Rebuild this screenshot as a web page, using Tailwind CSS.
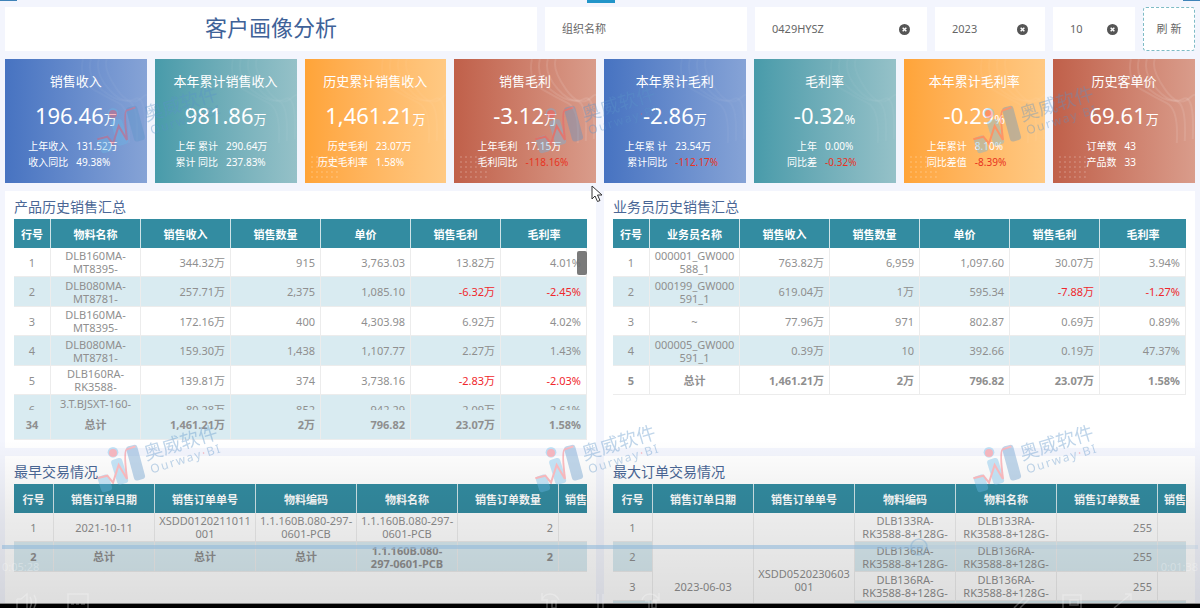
<!DOCTYPE html>
<html lang="zh-CN">
<head>
    <meta charset="UTF-8">
    <meta name="viewport" content="width=device-width, initial-scale=1.0">
    <title>客户画像分析</title>
    <script src="https://cdn.jsdelivr.net/npm/@tailwindcss/browser@4"></script>
    <style>
        body {
            font-family: 'Noto Sans', 'Noto Sans CJK SC', sans-serif;
        }
    </style>
</head>
<body class="relative flex h-screen flex-col overflow-hidden bg-[#f3f5fd] text-[11px] text-[#8f8f8f]">
    <main class="flex min-h-0 flex-1 flex-col gap-2 overflow-hidden px-[5px] pt-[7px]">
        <header class="flex h-11 shrink-0 gap-2 text-[#666]">
            <h1 class="flex flex-1 items-center justify-center bg-white pb-1 text-[22px] text-[#3f6298]">客户画像分析</h1>
            <div class="flex w-[202px] items-center bg-white px-[17px]">
                <input type="text" aria-label="组织名称" placeholder="组织名称" class="w-full min-w-0 outline-none placeholder:text-[#666]">
            </div>
            <div class="flex w-[172px] items-center bg-white px-[17px]">
                <input type="text" aria-label="组织" value="0429HYSZ" class="w-full min-w-0 outline-none">
                <button type="button" aria-label="清除组织" class="shrink-0">
                    <svg class="size-[11px]" viewBox="0 0 12 12"><circle cx="6" cy="6" r="6" fill="#555"/><path d="M4 4l4 4M8 4l-4 4" stroke="#fff" stroke-width="1.6"/></svg>
                </button>
            </div>
            <div class="flex w-[110px] items-center bg-white px-[17px]">
                <input type="text" aria-label="年份" value="2023" class="w-full min-w-0 outline-none">
                <button type="button" aria-label="清除年份" class="shrink-0">
                    <svg class="size-[11px]" viewBox="0 0 12 12"><circle cx="6" cy="6" r="6" fill="#555"/><path d="M4 4l4 4M8 4l-4 4" stroke="#fff" stroke-width="1.6"/></svg>
                </button>
            </div>
            <div class="flex w-[82px] items-center bg-white px-[17px]">
                <input type="text" aria-label="月份" value="10" class="w-full min-w-0 outline-none">
                <button type="button" aria-label="清除月份" class="shrink-0">
                    <svg class="size-[11px]" viewBox="0 0 12 12"><circle cx="6" cy="6" r="6" fill="#555"/><path d="M4 4l4 4M8 4l-4 4" stroke="#fff" stroke-width="1.6"/></svg>
                </button>
            </div>
            <button type="button" class="w-[52px] rounded-[3px] border border-dashed border-[#7fbcc6] bg-white">刷 新</button>
        </header>

        <section id="cards" class="grid shrink-0 grid-cols-8 gap-2 text-white"></section>

        <section class="grid shrink-0 grid-cols-2 gap-2">
            <div class="bg-white px-[9px] pb-2">
                <h2 class="flex h-7 items-center pt-0.5 text-[14px] text-[#4a6796]">产品历史销售汇总</h2>
                <div class="relative h-[221px] overflow-hidden">
                    <table id="products" class="w-full table-fixed border-separate border-spacing-0"></table>
                    <div class="absolute top-8 right-0 h-6 w-[10px] rounded-xs bg-[#6b6b6b]/90"></div>
                </div>
            </div>
            <div class="bg-white px-[9px] pb-2">
                <h2 class="flex h-7 items-center pt-0.5 text-[14px] text-[#4a6796]">业务员历史销售汇总</h2>
                <table id="sellers" class="w-full table-fixed border-separate border-spacing-0"></table>
            </div>
        </section>

        <section class="grid flex-1 grid-cols-2 gap-2">
            <div class="bg-white px-[9px]">
                <h2 class="flex h-7 items-center pt-0.5 text-[14px] text-[#4a6796]">最早交易情况</h2>
                <div class="overflow-hidden">
                    <table id="earliest" class="w-[645px] table-fixed border-separate border-spacing-0"></table>
                </div>
            </div>
            <div class="bg-white px-[9px]">
                <h2 class="flex h-7 items-center pt-0.5 text-[14px] text-[#4a6796]">最大订单交易情况</h2>
                <div class="overflow-hidden">
                    <table id="largest" class="w-[645px] table-fixed border-separate border-spacing-0"></table>
                </div>
            </div>
        </section>
    </main>
    <footer class="h-[5px] shrink-0 border-t border-[#888] bg-black"></footer>

    <!-- window edges -->
    <div class="absolute top-0 left-0 h-px w-[17px] bg-[#3f83b8]"></div>
    <div class="absolute top-0 left-[587px] h-[3px] w-7 bg-[#2295c9]"></div>
    <div class="absolute top-0 right-0 h-px w-[17px] bg-[#3f83b8]"></div>

    <!-- player controls, fading out -->
    <div class="pointer-events-none absolute inset-x-0 bottom-[5px] h-[163px] bg-linear-to-b from-black/0 via-black/8 to-black/13"></div>
    <div class="pointer-events-none absolute inset-x-[2px] bottom-[59px] h-1 bg-[#a9c4dc]/30">
        <div class="h-full w-[77%] bg-[#8db9dc]/45"></div>
    </div>
    <svg class="pointer-events-none absolute bottom-[51px] left-[909px] size-5" viewBox="0 0 20 20"><circle cx="10" cy="10" r="8" fill="#8ab8dc" fill-opacity=".1" stroke="#86b0d2" stroke-opacity=".45" stroke-width="1.5"/></svg>
    <div class="pointer-events-none absolute inset-x-[2px] bottom-[33px] flex justify-between text-[11px] leading-4 text-white/30">
        <span>0:05:28</span>
        <span>0:01:38</span>
    </div>
    <svg class="pointer-events-none absolute bottom-0 left-0 h-5 w-full" viewBox="0 0 1200 20" preserveAspectRatio="none" fill="none" stroke="#fff" stroke-opacity=".28" stroke-width="1.5">
        <path d="M17 11h4l6-5v14M17 11v9M30 9q3 5 0 11M34 7q4 6 0 13"/>
        <path d="M68 20V6h20v14M71 16h3M76 16h3M81 16h4"/>
        <path d="M542 12q2-6 8-6t9 6M542 5v7h6M547 13v7M552 13h4v7h-4z"/>
        <path d="M598 6v14M603 6v14"/>
        <path d="M642 12q2-6 8-6t9 6M659 5v7h-6M645 13h4v7M652 13h4v7h-4z"/>
        <path d="M1014 20l12-12 3 3-9 9"/>
        <path d="M1063 20V7h18v13M1070 12h8v5h-8z"/>
        <path d="M1114 20l17-14M1125 6h6v6"/>
    </svg>

    <div id="marks" class="pointer-events-none absolute inset-0 overflow-hidden"></div>

    <svg class="pointer-events-none absolute top-[185px] left-[591px] h-[18px] w-3" viewBox="0 0 12 18"><path d="M1 1v13l3-3 2.5 5.500 2.500-1L6.500 10H11z" fill="#fff" stroke="#333"/></svg>

    <script>
        const backgrounds = [
            'bg-linear-to-r from-[#4773c1] to-[#86a3d6]',
            'bg-linear-to-r from-[#489baa] to-[#95c1c8]',
            'bg-linear-to-r from-[#ffa438] to-[#ffc983]',
            'bg-linear-to-r from-[#c0604a] to-[#d99c8b]'
        ];

        const cards = [
            ['销售收入', '196.46', '万', '上年收入', '131.52万', '收入同比', '49.38%'],
            ['本年累计销售收入', '981.86', '万', '上年 累计', '290.64万', '累计 同比', '237.83%'],
            ['历史累计销售收入', '1,461.21', '万', '历史毛利', '23.07万', '历史毛利率', '1.58%'],
            ['销售毛利', '-3.12', '万', '上年毛利', '17.15万', '毛利同比', '-118.16%'],
            ['本年累计毛利', '-2.86', '万', '上年累 计', '23.54万', '累计同比', '-112.17%'],
            ['毛利率', '-0.32', '%', '上年', '0.00%', '同比差', '-0.32%'],
            ['本年累计毛利率', '-0.29', '%', '上年累计', '8.10%', '同比差值', '-8.39%'],
            ['历史客单价', '69.61', '万', '订单数', '43', '产品数', '33']
        ];

        const dots = Array.from({ length: 30 }, (_, i) =>
            `<circle cx="${7 + (i % 6) * 5}" cy="${98 + Math.floor(i / 6) * 5}" r="1"/>`).join('');
        const waves = [0, 8, 16, 24].map(d =>
            `<path d="M${78 + d} 0q-4 ${22 - d / 2} 10 30t26 ${14 - d / 4}t10 40"/>`).join('');

        document.getElementById('cards').innerHTML = cards.map((c, i) => `
            <article class="relative h-[124px] overflow-hidden pt-3 ${backgrounds[i % 4]}">
                <svg class="absolute inset-0 size-full" viewBox="0 0 142 124">
                    ${i % 4 > 1 ? `<g fill="#fff" fill-opacity=".2">${dots}</g>` : ''}
                    <g fill="none" stroke="#fff" stroke-opacity="${i % 4 === 3 ? '.1' : '.04'}" stroke-width="2">${waves}</g>
                </svg>
                <div class="relative">
                    <h3 class="text-center text-[13px] leading-5">${c[0]}</h3>
                    <p class="mt-2 text-center text-[22px] leading-8">${c[1]}<span class="text-[13px]">${c[2]}</span></p>
                    <dl class="mt-[3px] grid grid-cols-[9fr_10fr] gap-x-2 text-[10px] leading-4 whitespace-nowrap">
                        <dt class="flex justify-end">${c[3]}</dt><dd>${c[4]}</dd>
                        <dt class="flex justify-end">${c[5]}</dt><dd class="${c[6][0] === '-' ? 'text-[#e8331f]' : ''}">${c[6]}</dd>
                    </dl>
                </div>
            </article>`).join('');

        const cell = 'border-r border-b border-[#ececec] py-0 leading-[13px] whitespace-nowrap';
        const blue = 'bg-[#d9ebf1]';

        function head(names, widths) {
            return '<thead><tr class="h-[29px] bg-[#338ca1] text-white">' + names.map((n, i) =>
                `<th scope="col" class="${widths[i]} overflow-hidden border-r border-[#cfe4e8] px-1.5 pt-[3px] pb-0 font-bold whitespace-nowrap last:border-r-0">${n}</th>`).join('') + '</tr></thead>';
        }

        function row(r, i, centered, bold) {
            const shade = i % 2 ? blue : '';
            return `<tr class="${i % 2 ? 'h-[30px]' : 'h-[29px]'} ${bold ? 'font-bold' : ''}">` + r.map((v, j) => {
                if (v && v.span) {
                    return `<td rowspan="5" class="${cell} bg-white px-1 text-center ${v.pad || ''}">${v.text}</td>`;
                }
                const align = j < centered ? 'px-1 text-center' : 'px-[5px] text-right';
                const red = v[0] === '-' ? 'text-[#f0282d]' : '';
                return `<td class="${cell} ${shade} ${i % 2 ? 'border-[#d9ebf1]' : ''} ${align} ${red}">${v}</td>`;
            }).join('') + '</tr>';
        }

        const summaryWidths = ['w-[37px]', 'w-[90px]', 'w-[90px]', 'w-[90px]', 'w-[90px]', 'w-[90px]', 'w-auto'];
        const orderWidths = ['w-10', 'w-[101px]', 'w-[101px]', 'w-[101px]', 'w-[101px]', 'w-[101px]', 'w-[100px] text-left'];
        const orderNames = ['行号', '销售订单日期', '销售订单单号', '物料编码', '物料名称', '销售订单数量', '销售订单金额'];

        const products = [
            ['1', 'DLB160MA-<br>MT8395-', '344.32万', '915', '3,763.03', '13.82万', '4.01%'],
            ['2', 'DLB080MA-<br>MT8781-', '257.71万', '2,375', '1,085.10', '-6.32万', '-2.45%'],
            ['3', 'DLB160MA-<br>MT8395-', '172.16万', '400', '4,303.98', '6.92万', '4.02%'],
            ['4', 'DLB080MA-<br>MT8781-', '159.30万', '1,438', '1,107.77', '2.27万', '1.43%'],
            ['5', 'DLB160RA-<br>RK3588-', '139.81万', '374', '3,738.16', '-2.83万', '-2.03%'],
            ['6', '3.T.BJSXT-160-<br>&nbsp;', '80.28万', '852', '942.29', '2.09万', '2.61%']
        ];
        document.getElementById('products').innerHTML =
            head(['行号', '物料名称', '销售收入', '销售数量', '单价', '销售毛利', '毛利率'], summaryWidths) +
            '<tbody>' + products.map((r, i) => row(r, i, 2)).join('') + '</tbody>' +
            '<tfoot class="sticky bottom-0">' + row(['34', '总计', '1,461.21万', '2万', '796.82', '23.07万', '1.58%'], 1, 2, true) + '</tfoot>';

        const sellers = [
            ['1', '000001_GW000<br>588_1', '763.82万', '6,959', '1,097.60', '30.07万', '3.94%'],
            ['2', '000199_GW000<br>591_1', '619.04万', '1万', '595.34', '-7.88万', '-1.27%'],
            ['3', '~', '77.96万', '971', '802.87', '0.69万', '0.89%'],
            ['4', '000005_GW000<br>591_1', '0.39万', '10', '392.66', '0.19万', '47.37%'],
            ['5', '总计', '1,461.21万', '2万', '796.82', '23.07万', '1.58%']
        ];
        document.getElementById('sellers').innerHTML =
            head(['行号', '业务员名称', '销售收入', '销售数量', '单价', '销售毛利', '毛利率'], summaryWidths) +
            '<tbody>' + sellers.map((r, i) => row(r, i, 2, i === 4)).join('') + '</tbody>';

        document.getElementById('earliest').innerHTML = head(orderNames, orderWidths) + '<tbody>' +
            row(['1', '2021-10-11', 'XSDD0120211011<br>001', '1.1.160B.080-297-<br>0601-PCB', '1.1.160B.080-297-<br>0601-PCB', '2', ''], 0, 5) +
            row(['2', '总计', '总计', '总计', '1.1.160B.080-<br>297-0601-PCB', '2', ''], 1, 5, true) + '</tbody>';

        const largest = [
            ['1', { span: true, text: '2023-06-03' }, { span: true, text: 'XSDD0520230603<br>001', pad: 'pb-3' }, 'DLB133RA-<br>RK3588-8+128G-', 'DLB133RA-<br>RK3588-8+128G-', '255', ''],
            ['2', 'DLB136RA-<br>RK3588-8+128G-', 'DLB136RA-<br>RK3588-8+128G-', '255', ''],
            ['3', 'DLB136RA-<br>RK3588-8+128G-', 'DLB136RA-<br>RK3588-8+128G-', '255', ''],
            ['', '', '', '', ''],
            ['', '', '', '', '']
        ];
        document.getElementById('largest').innerHTML = head(orderNames, orderWidths) + '<tbody>' +
            largest.map((r, i) => row(r, i, i ? 3 : 5)).join('') + '</tbody>';

        const mark = `
            <svg class="h-20 w-[140px] opacity-38" viewBox="0 0 420 240">
                <g fill="#69b9e6">
                    <rect x="28" y="180" width="34" height="50" rx="9" transform="rotate(-17 45 205)"/>
                    <rect x="72" y="130" width="34" height="78" rx="9" transform="rotate(-17 89 169)"/>
                    <circle cx="69" cy="112" r="16"/>
                </g>
                <rect x="120" y="90" width="34" height="106" rx="9" transform="rotate(-15 137 143)" fill="#5b93c9"/>
                <circle cx="69" cy="114" r="12" fill="#f8525d"/>
                <path d="M22 190L52 182 69 203 86 150 111 192Q100 105 111 103L136 94" fill="none" stroke="#f8525d" stroke-width="6"/>
                <g transform="rotate(-17 170 140)" fill="#5b93c9">
                    <text x="170" y="136" font-size="57">奥威软件</text>
                    <text x="174" y="178" font-size="36" letter-spacing="5">Ourway<tspan fill="#f8525d">·</tspan>BI</text>
                </g>
            </svg>`;
        document.getElementById('marks').innerHTML =
            `<div class="absolute top-[76px] left-[90px] flex gap-[298px]">${mark}${mark}${mark}</div>
             <div class="absolute top-[415px] left-[90px] flex gap-[298px]">${mark}${mark}${mark}</div>`;
    </script>
</body>
</html>
